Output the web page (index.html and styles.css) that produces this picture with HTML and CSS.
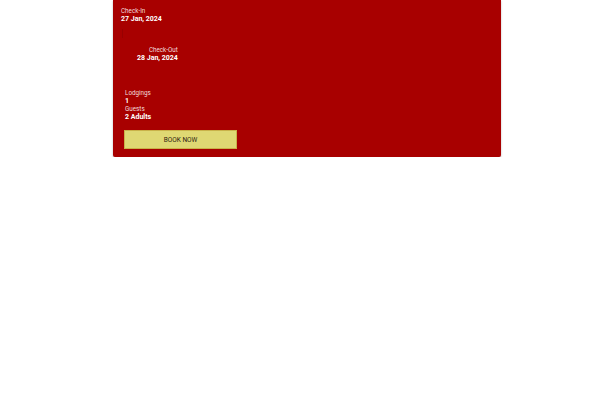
FILE: index.html
```html
<!DOCTYPE html>
<html>
<head>
<meta charset="utf-8">
<link rel="stylesheet" href="styles.css">
</head>
<body>
<div class="card">
  <div class="date checkin">
    <div class="label">Check-In</div>
    <div class="value">27 Jan, 2024</div>
  </div>
  <div class="divider"></div>
  <div class="date checkout">
    <div class="label">Check-Out</div>
    <div class="value">28 Jan, 2024</div>
  </div>
  <div class="info">
    <div class="label">Lodgings</div>
    <div class="value">1</div>
    <div class="label">Guests</div>
    <div class="value">2 Adults</div>
  </div>
  <button class="book">BOOK NOW</button>
</div>
</body>
</html>
```
FILE: styles.css
```css
html, body {
  margin: 0;
  padding: 0;
  background: #ffffff;
}
body {
  font-family: Roboto, "Liberation Sans", sans-serif;
}
.card {
  margin-left: 113px;
  width: 388px;
  height: 157px;
  box-sizing: border-box;
  background: #a80000;
  border-radius: 0 0 2px 2px;
  box-shadow: 0 1px 2px rgba(0,0,0,0.3);
  padding: 7px 0 0 8px;
  display: flex;
  flex-direction: column;
  align-items: flex-start;
}
.label {
  font-size: 6.3px;
  line-height: 8px;
  color: #f2dcdc;
}
.value {
  font-size: 7px;
  line-height: 8px;
  font-weight: 700;
  color: #ffffff;
}
.date .value {
  line-height: 9px;
}
.divider {
  width: 1px;
  height: 9px;
  margin: 5px 0 0 1px;
  background: #980000;
}
.checkout {
  margin: 8px 0 0 16px;
  text-align: right;
}
.info {
  margin: 26px 0 0 4px;
  display: flex;
  flex-direction: column;
}
.info .value:first-of-type {
  line-height: 9px;
}
.book {
  margin: 9px 0 0 3px;
  width: 113px;
  height: 19px;
  border: 1px solid #c9b24a;
  background: #dfd873;
  color: #2e2210;
  font-family: Roboto, "Liberation Sans", sans-serif;
  font-size: 6.5px;
  padding: 0;
  cursor: pointer;
}
```
